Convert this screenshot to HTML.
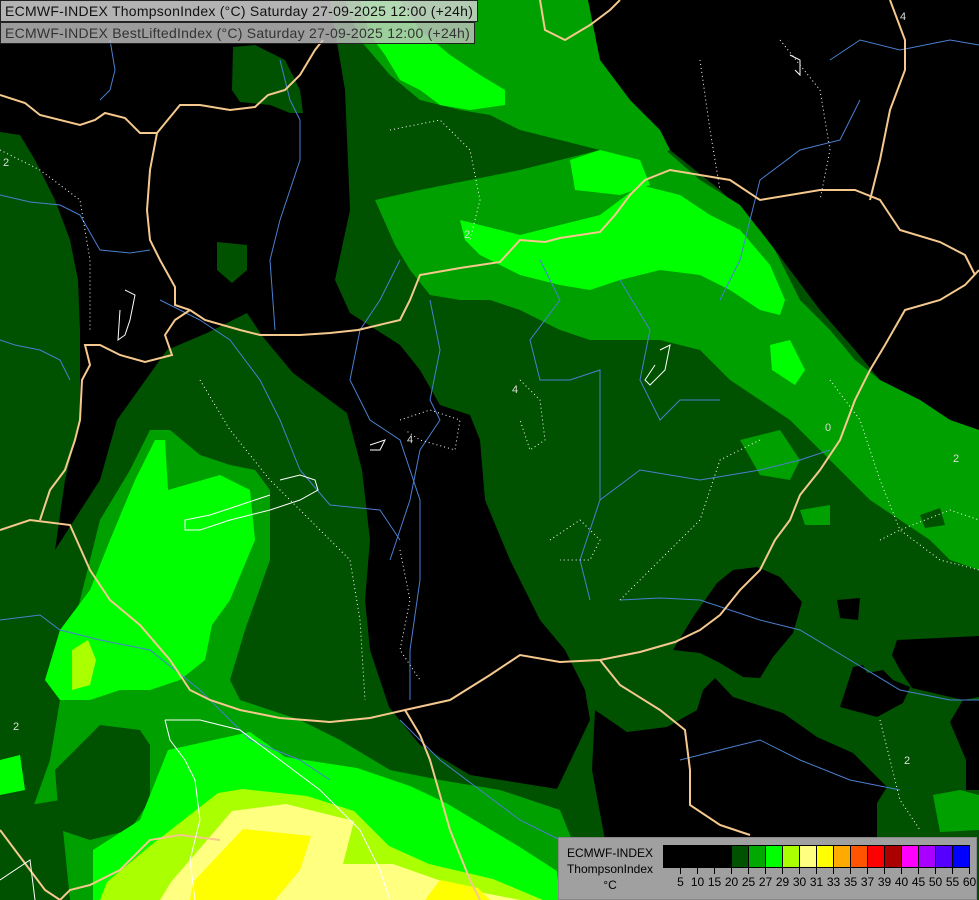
<!DOCTYPE html>
<html><head><meta charset="utf-8"><style>
html,body{margin:0;padding:0;background:#000;}
#w{position:relative;width:979px;height:900px;overflow:hidden;background:#000;}
svg{position:absolute;left:0;top:0;}
.hd{position:absolute;left:0;font:14px "Liberation Sans",sans-serif;letter-spacing:0.25px;color:#111;padding:0 4px;height:20px;line-height:21px;border:1px solid #222;white-space:nowrap;box-sizing:border-box;}
#lg{position:absolute;left:558px;top:837px;width:419px;height:63px;background:#a0a0a0;border:1px solid #888;box-sizing:border-box;font:12px "Liberation Sans",sans-serif;color:#000;}
</style></head><body><div id="w">
<svg width="979" height="900" viewBox="0 0 979 900">
<rect x="0" y="0" width="979" height="900" fill="#005200"/>
<g fill="#000">
<polygon points="0,0 330,0 345,90 350,210 335,280 350,313 400,345 420,370 440,405 470,415 480,440 485,500 510,560 540,620 565,650 585,690 590,720 557,789 470,775 420,745 389,707 370,650 365,600 370,540 362,470 347,413 293,373 263,337 247,313 207,333 167,350 117,420 100,480 55,550 65,480 80,420 80,330 78,280 70,240 55,200 35,160 20,135 0,132"/>
<polygon points="585,0 979,0 979,430 950,420 920,400 880,380 855,350 820,310 790,270 760,230 720,190 670,150 630,100 600,60"/>
<polygon points="595,710 627,732 667,727 697,710 703,690 715,678 733,697 783,713 817,737 853,753 887,787 877,803 877,840 930,900 600,900 605,840 592,770"/>
<polygon points="673,650 693,617 717,583 733,570 757,567 780,577 802,602 793,633 773,657 760,678 743,677 720,663 700,653"/>
<polygon points="840,707 853,667 863,665 867,673 883,670 893,680 910,687 903,703 877,717"/>
<polygon points="892,655 897,640 979,636 979,697 963,700 912,688 900,670"/>
<polygon points="979,700 963,700 950,722 966,760 966,790 979,790"/>
<polygon points="837,600 860,598 858,620 840,618"/>
<polygon points="0,0 330,0 320,40 0,40"/>
</g>
<polygon points="233,47 255,45 285,60 300,90 303,113 290,113 270,105 240,102 232,90" fill="#005200"/>
<polygon points="217,242 247,245 247,270 232,283 217,270" fill="#005200"/>
<g fill="#00a000">
<polygon points="345,0 588,0 600,60 630,100 660,130 670,150 640,165 600,150 560,140 520,130 490,115 460,110 420,100 390,75 360,40"/>
<polygon points="375,200 420,190 470,180 520,170 560,160 600,150 660,145 700,180 740,205 775,250 800,300 830,330 855,360 880,380 920,400 950,420 979,430 979,570 950,560 930,540 900,520 870,500 840,470 810,440 790,420 760,400 730,380 700,350 660,340 620,340 590,340 560,330 520,310 490,300 460,300 430,295 410,270 395,245"/>
<polygon points="740,440 780,430 800,460 790,480 760,475"/>
<polygon points="20,900 25,830 50,760 60,700 75,620 100,520 130,470 150,430 170,430 200,455 230,465 255,470 270,490 270,560 245,630 230,680 240,700 300,720 340,740 390,770 440,780 500,790 560,810 580,860 600,900"/>
<polygon points="933,795 960,790 979,795 979,830 940,832"/>
<polygon points="800,510 830,505 830,525 805,525"/>
</g>
<g fill="#005200">
<polygon points="55,770 100,725 140,730 150,745 150,800 130,830 90,840 60,830"/>
<polygon points="0,810 60,800 70,900 0,900"/>
<polygon points="920,515 940,508 945,525 925,528"/>
<polygon points="560,900 575,870 600,860 605,900"/>
</g>
<g fill="#00ff00">
<polygon points="360,0 400,0 420,30 450,55 480,75 505,90 505,105 470,110 440,105 420,90 400,80 385,55 370,35"/>
<polygon points="570,160 600,150 640,160 650,185 620,195 575,190"/>
<polygon points="460,220 520,235 560,225 600,215 640,185 680,195 710,215 740,230 770,265 785,300 780,315 760,310 730,290 700,275 660,270 620,280 590,290 560,285 520,275 480,255 465,240"/>
<polygon points="770,345 790,340 805,370 795,385 772,370"/>
<polygon points="135,480 155,440 165,440 168,490 220,475 250,490 255,540 230,600 212,625 205,660 180,680 150,690 120,690 90,700 60,700 45,680 60,630 90,590 110,540"/>
<polygon points="0,760 20,755 25,790 0,795"/>
<polygon points="93,900 93,850 140,820 168,750 250,732 285,757 357,768 410,786 446,803 518,846 557,871 560,900"/>
</g>
<g fill="#aaff00">
<polygon points="72,650 88,640 96,660 90,685 72,690"/>
<polygon points="100,900 107,882 150,846 218,793 243,789 307,796 354,811 389,846 429,864 493,879 543,900"/>
</g>
<polygon points="160,900 171,882 232,811 286,804 354,821 343,864 393,864 464,889 520,900" fill="#ffff80"/>
<polygon points="190,900 193,882 243,829 311,836 300,870 275,900" fill="#ffff00"/>
<polygon points="425,900 440,880 478,888 490,900" fill="#ffff00"/>
<g fill="none" stroke="#4a7fd0" stroke-width="1">
<polyline points="0,195 30,202 60,205 80,215 100,250 130,253 150,250"/>
<polyline points="110,40 115,70 110,90 100,100"/>
<polyline points="280,60 290,100 300,120 300,160 280,220 270,260 275,330"/>
<polyline points="0,340 15,345 40,350 60,360 70,380"/>
<polyline points="160,300 200,320 230,340 260,380 280,420 300,470 330,505 380,510 400,540"/>
<polyline points="0,620 40,615 60,630 100,640 150,650 200,690 250,740 300,760 330,780"/>
<polyline points="400,260 380,300 360,330 350,380 370,420 400,440 420,500 420,580 410,650 410,700"/>
<polyline points="430,300 440,350 430,400 440,420 420,450 410,500 390,560"/>
<polyline points="540,260 560,300 530,340 540,380 570,380 600,370 600,420 600,500 580,560 590,600"/>
<polyline points="620,280 650,330 640,380 660,420 680,400 720,400"/>
<polyline points="720,300 740,260 760,180 800,150 840,140 860,100"/>
<polyline points="830,60 860,40 900,50 950,40 979,45"/>
<polyline points="600,500 640,470 700,480 760,470 800,460 830,450"/>
<polyline points="620,600 660,598 700,600 760,620 800,630 850,660 900,690 950,700 979,700"/>
<polyline points="680,760 720,750 760,740 800,760 850,780 900,790"/>
<polyline points="400,720 440,760 480,790 520,820 560,840"/>
</g>
<g fill="none" stroke="#f5c88e" stroke-width="2">
<polyline points="0,95 25,103 40,115 80,125 95,120 105,113 125,118 140,133 157,133 150,170 147,210 150,240 160,260 175,287 175,305 190,310 205,320 240,330 260,335 300,335 330,333 358,330 400,320 410,300 420,275 460,268 480,265 500,262 520,240 545,242 560,238 600,232 615,215 630,195 645,180 670,170 700,175 730,180 760,200 790,195 820,190 855,190 880,200 900,230 940,242 965,255 975,275"/>
<polyline points="157,133 180,105 200,105 230,110 255,107 268,95 285,90 300,75 315,50 323,40"/>
<polyline points="190,310 175,320 165,335 172,355 145,362 120,355 100,345 85,345 90,365 82,380 80,420 75,440 65,470 50,490 40,520"/>
<polyline points="0,530 30,520 70,525 90,570 110,600 140,625 170,660 190,690 210,700 240,710 280,718 330,722 370,718 405,710 420,735 430,760 440,795 450,830 470,880 480,900"/>
<polyline points="405,710 450,700 490,675 520,655 560,662 600,660 640,652 675,642 700,630 720,615 740,590 760,570 775,540 790,520 800,495 820,470 840,440 855,400 870,370 885,345 905,310 940,300 965,285 979,270"/>
<polyline points="600,660 620,685 660,710 685,730 690,770 690,805 720,825 750,835"/>
<polyline points="540,0 545,30 565,40 590,25 610,10 620,0"/>
<polyline points="890,0 905,40 905,70 890,110 880,160 870,200"/>
<polyline points="0,830 15,850 30,870 45,890 60,900"/>
<polyline points="60,900 70,890 90,885 120,870 150,840 180,835 220,840"/>
</g>
<g fill="none" stroke="#fff" stroke-width="1" stroke-dasharray="1,3">
<polyline points="0,150 40,170 80,200 90,260 90,330"/>
<polyline points="200,380 230,430 270,480 310,520 350,560 360,620 365,700"/>
<polyline points="700,60 710,130 720,190"/>
<polyline points="780,40 820,90 830,150 820,200"/>
<polyline points="400,420 430,410 460,420 455,450 420,440 405,430"/>
<polyline points="390,130 440,120 470,150 480,200 470,240"/>
<polyline points="520,380 540,400 545,440 530,450 520,420"/>
<polyline points="550,540 580,520 600,540 590,560 560,560"/>
<polyline points="620,600 650,570 700,520 720,460 760,440"/>
<polyline points="830,380 860,420 880,480 900,530 940,560 979,570"/>
<polyline points="880,540 900,530 950,510 979,520"/>
<polyline points="880,720 890,760 900,800 920,830"/>
<polyline points="400,550 410,600 400,650 420,680"/>
</g>
<g fill="none" stroke="#fff" stroke-width="1">
<polyline points="280,480 300,475 315,480 318,490 300,500 270,510 230,520 200,530 185,530 185,520 210,515 240,505 270,495"/>
<polyline points="125,290 135,295 130,320 125,335 118,340 120,310"/>
<polyline points="370,445 385,440 380,450 370,450"/>
<polyline points="660,350 670,345 665,370 650,385 645,380 655,365"/>
<polyline points="790,55 800,60 800,75 795,70"/>
<polyline points="165,720 200,720 240,730 280,760 320,790 360,830 380,870 390,900"/>
<polyline points="165,720 170,740 185,760 195,780 200,820 190,860 195,900"/>
<polyline points="0,880 30,860 35,900"/>
</g>
<g font-family="Liberation Sans,sans-serif" font-size="11" fill="#ddd">
<text x="3" y="166">2</text><text x="464" y="238">2</text><text x="407" y="443">4</text>
<text x="512" y="393">4</text><text x="825" y="431">0</text><text x="953" y="462">2</text>
<text x="904" y="764">2</text><text x="13" y="730">2</text><text x="900" y="20">4</text>
</g>
</svg>
<div class="hd" style="top:0;width:478px;height:22px;background:rgba(210,210,210,0.85);">ECMWF-INDEX ThompsonIndex (°C) Saturday 27-09-2025 12:00 (+24h)</div>
<div class="hd" style="top:22px;width:475px;height:22px;background:rgba(195,195,195,0.8);color:#333;">ECMWF-INDEX BestLiftedIndex (°C) Saturday 27-09-2025 12:00 (+24h)</div>
<div id="lg">
<div style="position:absolute;left:5px;top:7px;width:92px;line-height:16px;text-align:center;">ECMWF-INDEX<br>ThompsonIndex<br>°C</div>
<svg width="419" height="63" style="left:0;top:0" viewBox="0 0 419 63">
<g stroke="#000" stroke-width="1">
<rect x="104.5" y="7.5" width="17" height="22" fill="#000"/><rect x="121.5" y="7.5" width="17" height="22" fill="#000"/><rect x="138.5" y="7.5" width="17" height="22" fill="#000"/><rect x="155.5" y="7.5" width="17" height="22" fill="#000"/>
<rect x="172.5" y="7.5" width="17" height="22" fill="#005200"/><rect x="189.5" y="7.5" width="17" height="22" fill="#00a800"/><rect x="206.5" y="7.5" width="17" height="22" fill="#00ff00"/><rect x="223.5" y="7.5" width="17" height="22" fill="#aaff00"/>
<rect x="240.5" y="7.5" width="17" height="22" fill="#ffff80"/><rect x="257.5" y="7.5" width="17" height="22" fill="#ffff00"/><rect x="274.5" y="7.5" width="17" height="22" fill="#ffaa00"/><rect x="291.5" y="7.5" width="17" height="22" fill="#ff5500"/>
<rect x="308.5" y="7.5" width="17" height="22" fill="#ff0000"/><rect x="325.5" y="7.5" width="17" height="22" fill="#aa0000"/><rect x="342.5" y="7.5" width="17" height="22" fill="#ff00ff"/><rect x="359.5" y="7.5" width="17" height="22" fill="#aa00ff"/>
<rect x="376.5" y="7.5" width="17" height="22" fill="#5500ff"/><rect x="393.5" y="7.5" width="17" height="22" fill="#0000ff"/>
<path d="M121.5 30v6M138.5 30v6M155.5 30v6M172.5 30v6M189.5 30v6M206.5 30v6M223.5 30v6M240.5 30v6M257.5 30v6M274.5 30v6M291.5 30v6M308.5 30v6M325.5 30v6M342.5 30v6M359.5 30v6M376.5 30v6M393.5 30v6M410.5 30v6"/>
</g>
<g font-family="Liberation Sans,sans-serif" font-size="12" text-anchor="middle" fill="#000">
<text x="121.5" y="48">5</text><text x="138.5" y="48">10</text><text x="155.5" y="48">15</text><text x="172.5" y="48">20</text><text x="189.5" y="48">25</text><text x="206.5" y="48">27</text><text x="223.5" y="48">29</text><text x="240.5" y="48">30</text><text x="257.5" y="48">31</text><text x="274.5" y="48">33</text><text x="291.5" y="48">35</text><text x="308.5" y="48">37</text><text x="325.5" y="48">39</text><text x="342.5" y="48">40</text><text x="359.5" y="48">45</text><text x="376.5" y="48">50</text><text x="393.5" y="48">55</text><text x="410.5" y="48">60</text>
</g>
</svg>
</div>
</div></body></html>
